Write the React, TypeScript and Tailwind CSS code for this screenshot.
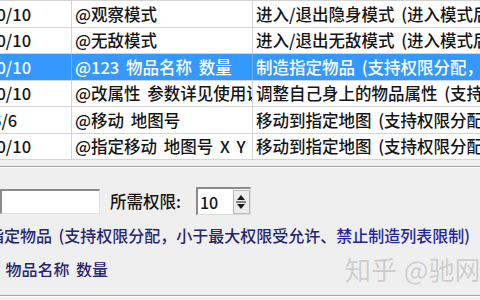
import React from 'react';

interface Row {
  perm: string;
  cmd: string;
  desc: string;
  h: string;
  selected?: boolean;
}

const rows: Row[] = [
  { perm: '10/10', cmd: '@观察模式', desc: '进入/退出隐身模式 (进入模式后可观察)', h: 'h-[27px]' },
  { perm: '10/10', cmd: '@无敌模式', desc: '进入/退出无敌模式 (进入模式后不受伤害)', h: 'h-[26px]' },
  { perm: '10/10', cmd: '@123 物品名称 数量', desc: '制造指定物品 (支持权限分配，小于最大权限)', h: 'h-[27px]', selected: true },
  { perm: '10/10', cmd: '@改属性 参数详见使用说明', desc: '调整自己身上的物品属性 (支持权限分配)', h: 'h-[26px]' },
  { perm: '6/6', cmd: '@移动 地图号', desc: '移动到指定地图 (支持权限分配)', h: 'h-[27px]' },
  { perm: '10/10', cmd: '@指定移动 地图号 X Y', desc: '移动到指定地图 (支持权限分配)', h: 'h-[26px]' },
];

const SpinArrows: React.FC = () => (
  <svg width="14" height="20" viewBox="0 0 14 20">
    <path d="M7 3 L11 8 L3 8 Z" fill="#1a1a1a" />
    <line x1="2" y1="10" x2="12" y2="10" stroke="#1a1a1a" strokeWidth="1" />
    <path d="M3 12 L11 12 L7 17 Z" fill="#1a1a1a" />
  </svg>
);

const App: React.FC = () => {
  return (
    <div className="w-[480px] h-[300px] overflow-hidden bg-[#efefef] font-['Noto_Sans_CJK_SC',sans-serif] text-[16.5px] text-[#151515] [word-spacing:3px] flex flex-col">
      {/* command list */}
      <div className="bg-white border-t border-[#d4d4d4] shrink-0 font-medium">
        {rows.map((r, i) => (
          <div
            key={i}
            className={`${r.h} flex border-b border-[#d4d4d4] whitespace-nowrap leading-none ${
              r.selected ? 'bg-[#3399ff] text-white' : ''
            }`}
          >
            <div className={`w-[72px] shrink-0 flex items-center overflow-hidden border-r ${r.selected ? 'border-[#6fb3f5]' : 'border-[#d4d4d4]'}`}>
              <span className={r.perm === '6/6' ? 'ml-[-8px]' : 'ml-[-13px]'}>{r.perm}</span>
            </div>
            <div className={`w-[181px] shrink-0 flex items-center overflow-hidden pl-[3px] border-r ${r.selected ? 'border-[#6fb3f5]' : 'border-[#d4d4d4]'}`}>
              <span>{r.cmd}</span>
            </div>
            <div className="flex-1 flex items-center overflow-hidden pl-[3px]">
              <span>{r.desc}</span>
            </div>
          </div>
        ))}
      </div>

      {/* group box top edge */}
      <div className="mt-[6px] h-[2px] border-t border-[#a3a3a3] border-b border-b-white shrink-0" />

      {/* inputs */}
      <div className="mt-[19px] flex items-center h-[28px] shrink-0 font-medium">
        <div className="w-[100px] h-[25px] bg-white border-t-2 border-l-2 border-t-[#8a8a8a] border-l-[#8a8a8a] border-b border-r border-b-[#e0e0e0] border-r-[#e0e0e0]" />
        <span className="ml-[10px] leading-none">所需权限:</span>
        <div className="ml-[15px] w-[55px] h-[28px] flex items-center bg-white border-t-2 border-l-2 border-t-[#8a8a8a] border-l-[#8a8a8a] border-b border-r border-b-[#dcdcdc] border-r-[#dcdcdc]">
          <span className="ml-[2px] flex-1 leading-none text-[16px]">10</span>
          <div className="w-[17px] h-[24px] bg-[#ececec] border border-[#b8b8b8] flex items-center justify-center">
            <SpinArrows />
          </div>
        </div>
      </div>

      {/* description */}
      <div className="mt-[12px] ml-[-44px] whitespace-nowrap leading-none text-[16px] font-medium text-[#26266e]">
        制造指定物品 (支持权限分配，小于最大权限受允许、<span className="text-[#2424a0]">禁止制造列表限制)</span>
      </div>

      <div className="mt-[13px] flex items-center whitespace-nowrap h-[26px]">
        <div className="w-[345px] shrink-0 overflow-hidden">
          <span className="block ml-[-44px] leading-none text-[16px] font-medium text-[#26266e]">@123 物品名称 数量</span>
        </div>
        <span className="leading-none text-[26px] text-[#cdcdcd] [word-spacing:1px] [text-shadow:0_0_1px_#ffffff]">知乎 @驰网艾</span>
      </div>

      <div className="mt-auto mb-[3px] h-[2px] border-t border-[#a3a3a3] border-b border-b-white shrink-0" />
    </div>
  );
};

export default App;
